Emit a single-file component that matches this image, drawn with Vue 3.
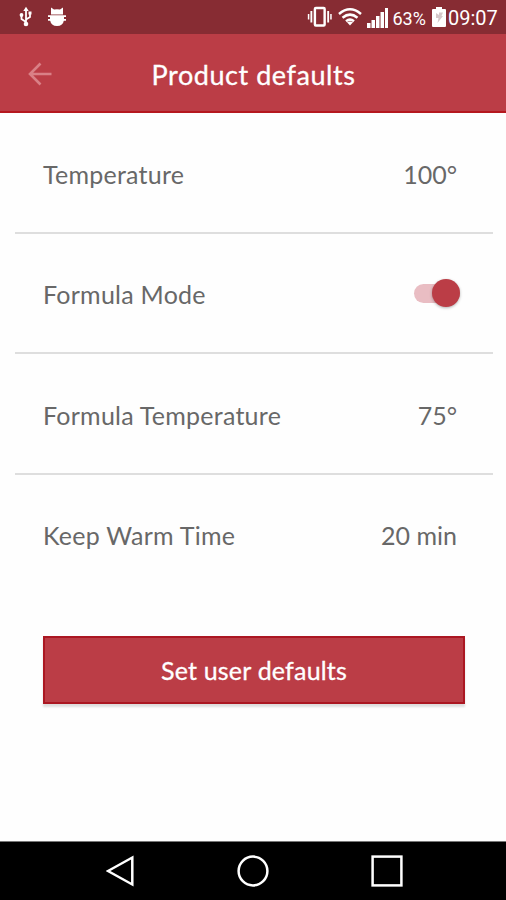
<script setup>
import { ref } from 'vue'

const formulaMode = ref(true)
const rows = [
  { label: 'Temperature', value: '100°' },
  { label: 'Formula Mode', toggle: true },
  { label: 'Formula Temperature', value: '75°' },
  { label: 'Keep Warm Time', value: '20 min' },
]
</script>

<template>
  <div class="screen">
    <div class="status">
      <svg class="usb" width="16" height="22" viewBox="0 0 16 22" fill="none" stroke="#fff" stroke-width="1.8">
        <path d="M8 4V18M8 16L3.500 13V9.500M8 13.500L12 11V7.500" />
        <path d="M8 .8L10.700 5H5.300Z M10.500 5.500H13.500V8.500H10.500Z" fill="#fff" stroke="none" />
        <circle cx="3.500" cy="9" r="1.900" fill="#fff" stroke="none" />
        <circle cx="8" cy="18" r="2.300" fill="#fff" stroke="none" />
      </svg>
      <svg class="bug" width="20" height="20" viewBox="0 0 20 20" fill="#fff">
        <path d="M4 7.500V4L4 .5L7 2.500Q10 1.800 13 2.500L16 .5V7.500Z" />
        <path d="M3 9H17V13Q16 19 10 19Q4 19 3 13Z" />
        <path d="M1 8.300H19V10H1ZM1 12H19V13.700H1Z" />
      </svg>
      <svg class="vibrate" width="26" height="22" viewBox="0 0 28 22" preserveAspectRatio="none" fill="none" stroke="#fff">
        <rect x="8.500" y="2" width="10.500" height="17.500" rx="1" stroke-width="2.600" />
        <path d="M4.700 5V16.500M22.800 5V16.500" stroke-width="2" />
        <path d="M1.700 8V13.500M25.800 8V13.500" stroke-width="1.600" />
      </svg>
      <svg class="wifi" width="24" height="20" viewBox="0 0 24 20" fill="none" stroke="#fff" stroke-width="2.500">
        <path d="M1 7Q12 -2.500 23 7M4.500 10.700Q12 4.500 19.500 10.700M8 14.200Q12 11 16 14.200" />
        <path d="M9 15.200Q12 13.600 15 15.200L12 18.500Z" fill="#fff" stroke="none" />
      </svg>
      <svg class="signal" width="22" height="21" viewBox="0 0 22 21" fill="#fff">
        <path d="M0 16H3.500V21H0ZM4.500 13H8V21H4.500ZM9 9H12.500V21H9ZM13.500 5H17V21H13.500ZM18 1H21V21H18Z" />
      </svg>
      <span class="percent">63%</span>
      <svg class="battery" width="14" height="20" viewBox="0 0 14 20">
        <path d="M4 0H10V2H13Q14 2 14 3V19Q14 20 13 20H1Q0 20 0 19V3Q0 2 1 2H4Z" fill="#fff" />
        <path d="M4 6L7 8V5.500H11L9.500 9H11L5.500 16L6.500 11H4Z" fill="#d5c8ca" />
      </svg>
      <span class="clock">09:07</span>
    </div>
    <header class="header">
      <svg class="back" width="24" height="24" viewBox="0 0 24 24" fill="none" stroke="#d98086" stroke-width="2.600">
        <path d="M23.500 12H2.500M12.500 1.500L2 12L12.500 22.500" />
      </svg>
      <h1 class="title">Product defaults</h1>
    </header>
    <main class="content">
      <div v-for="row in rows" :key="row.label" class="row">
        <span class="label">{{ row.label }}</span>
        <button
          v-if="row.toggle"
          class="switch"
          :class="{ on: formulaMode }"
          role="switch"
          :aria-checked="formulaMode"
          @click="formulaMode = !formulaMode"
        ><span class="track"><span class="thumb"></span></span></button>
        <span v-else class="value">{{ row.value }}</span>
      </div>
      <button class="submit">Set user defaults</button>
    </main>
    <nav class="nav">
      <svg width="28" height="32" viewBox="0 0 28 32" fill="none" stroke="#fff" stroke-width="2.500">
        <path d="M26.300 2.500V29.500L2 16Z" />
      </svg>
      <svg width="32" height="32" viewBox="0 0 32 32" fill="none" stroke="#fff" stroke-width="2.500">
        <circle cx="16" cy="16" r="14.400" />
      </svg>
      <svg width="32" height="32" viewBox="0 0 32 32" fill="none" stroke="#fff" stroke-width="2.500">
        <rect x="1.600" y="1.600" width="28.800" height="28.800" />
      </svg>
    </nav>
  </div>
</template>

<style>
body {
  background: #fff;
}
</style>

<style scoped>
.screen {
  width: 506px;
  height: 900px;
  display: flex;
  flex-direction: column;
  background: #fefefe;
  font-family: Lato, sans-serif;
  overflow: hidden;
}
.status {
  height: 34px;
  flex: none;
  display: flex;
  align-items: center;
  box-sizing: border-box;
  padding: 0 0 0 18px;
  background: #872c33;
  color: #fff;
  font-family: Roboto, sans-serif;
}
.status svg,
.status span {
  flex: none;
}
.bug {
  margin-left: 13px;
}
.vibrate {
  margin-left: 239.5px;
}
.wifi {
  margin-left: 5.500px;
}
.signal {
  margin-left: 5px;
}
.percent {
  width: 35px;
  margin-left: 3.500px;
  padding-top: 2px;
  font-size: 18px;
}
.battery {
  margin-left: 4.500px;
}
.clock {
  margin-left: 2px;
  padding-top: 2px;
  font-size: 20px;
}
.header {
  height: 79px;
  flex: none;
  box-sizing: border-box;
  display: grid;
  grid-template-columns: 52px 1fr 51px;
  align-items: center;
  background: #bb3d46;
  border-bottom: 2px solid #b5181f;
}
.back {
  margin: 2px 0 0 28px;
}
.title {
  margin: 0;
  padding-top: 5px;
  text-align: center;
  font-size: 27px;
  font-weight: 400;
  line-height: 32px;
  letter-spacing: 0.55px;
  color: #fff;
  -webkit-text-stroke: 0.3px #fff;
}
.content {
  flex: 1;
  padding: 0 13px 0 15px;
}
.row {
  height: 120.5px;
  box-sizing: border-box;
  padding: 3px 36px 0 28px;
  display: flex;
  align-items: center;
  justify-content: space-between;
  border-bottom: 2px solid #dedede;
  color: #686868;
  font-size: 25px;
}
.row:nth-child(4) {
  border-bottom-color: transparent;
}
.label {
  letter-spacing: 0.25px;
}
.switch {
  margin: -2px -3px 0 0;
  padding: 0;
  border: 0;
  background: none;
}
.track {
  display: flex;
  align-items: center;
  width: 46px;
  height: 19px;
  border-radius: 9.500px;
  background: #e9bdc3;
}
.thumb {
  width: 28px;
  height: 28px;
  flex: none;
  border-radius: 50%;
  background: #bb3d46;
  box-shadow: 0 1px 3px rgba(0, 0, 0, 0.3);
}
.switch.on .thumb {
  margin-left: auto;
}
.submit {
  display: block;
  width: 422px;
  height: 68px;
  margin: 41px 0 0 27.500px;
  padding: 0 0 0 1px;
  border: 2px solid #ab1722;
  background: #bb3d46;
  box-shadow: 0 3px 2px rgba(0, 0, 0, 0.13);
  color: #fff;
  font-family: inherit;
  font-size: 25px;
  letter-spacing: 0.2px;
  -webkit-text-stroke: 0.3px #fff;
}
.nav {
  height: 59px;
  flex: none;
  box-sizing: border-box;
  display: flex;
  align-items: center;
  justify-content: space-between;
  padding: 0 103px 0 106px;
  background: #000;
  border-top: 1px solid #777;
}
</style>
